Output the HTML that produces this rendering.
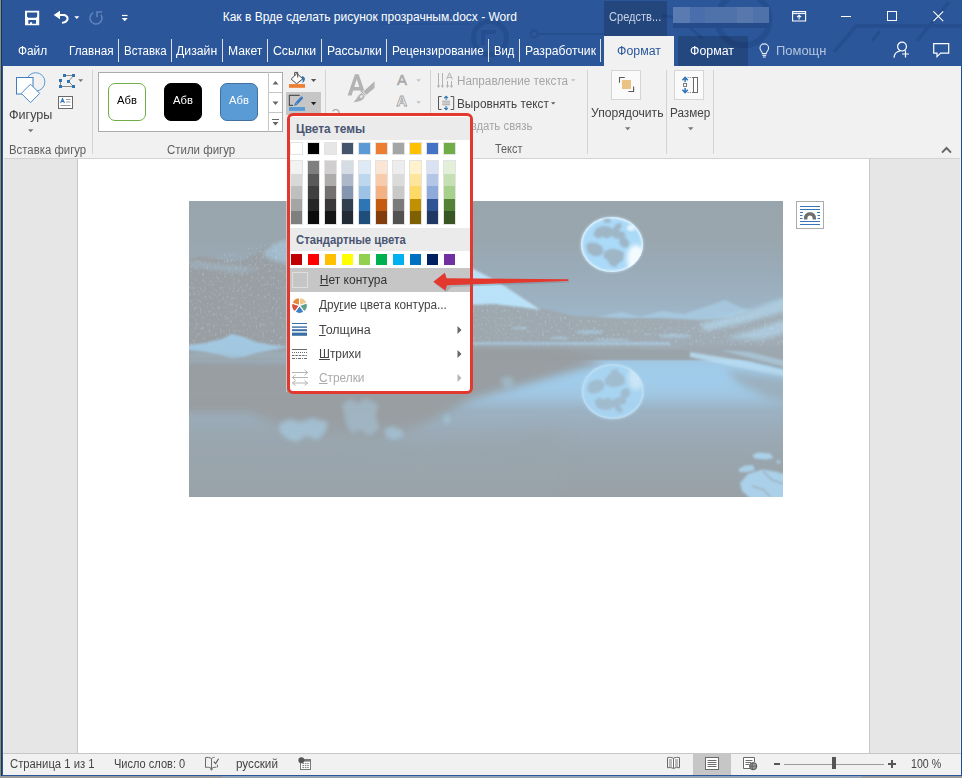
<!DOCTYPE html>
<html lang="ru">
<head>
<meta charset="utf-8">
<title>Как в Врде сделать рисунок прозрачным.docx - Word</title>
<style>
html,body{margin:0;padding:0}
body{width:962px;height:778px;position:relative;overflow:hidden;background:#8a8f94;font-family:"Liberation Sans",sans-serif;font-size:12px;color:#444}
.a{position:absolute}
.t{position:absolute;white-space:nowrap;line-height:1;transform-origin:0 0;font-size:12px}
.sep{position:absolute;width:1px;background:#d4d4d4;top:70px;height:84px}
.tsep{position:absolute;width:1px;background:#e0e0e0;top:39px;height:23px}
svg{position:absolute;overflow:visible}
.sw{position:absolute;width:11px;height:11px;top:143px;box-shadow:0 0 0 1px #e3e3e3}
.col{position:absolute;width:11px;top:161px;height:63px;box-shadow:0 0 0 1px #e3e3e3}
.col i{display:block;height:12.6px}
.ss{position:absolute;width:11px;height:11px;top:254px}
u{text-decoration:underline;text-underline-offset:1px}
</style>
</head>
<body>
<!-- desktop edges -->
<div class="a" style="left:0;top:0;width:1px;height:778px;background:#6c94aa"></div>
<div class="a" style="left:1px;top:0;width:1px;height:778px;background:#323232"></div>
<!-- window -->
<div class="a" id="win" style="left:2px;top:0;width:960px;height:776px;background:#2b579a"></div>

<!-- title bar decorations (circuit) -->
<svg class="a" style="left:0;top:0" width="962" height="66" viewBox="0 0 962 66">
<g fill="none" stroke="#254e8e" stroke-width="3.5">
<path d="M834 52 L856 26 H962"/>
<path d="M917 41 L949 2"/>
<path d="M872 41 L880 31" stroke-width="3"/>
<circle cx="743.5" cy="19.5" r="26" stroke-width="6"/>
<path d="M726 20 H742 L734 28Z" fill="#254e8e" stroke="none"/>
<path d="M662 16 C680 16 690 28 702 38" stroke-width="3"/>
<circle cx="490" cy="38" r="16.5" stroke-width="5"/>
<path d="M483 45 V32 H496" stroke-width="4"/>
<circle cx="534" cy="34" r="3.5" stroke-width="2"/>
<path d="M538 34 H604" stroke-width="2"/>
<path d="M380 24 H470" stroke-width="2" opacity=".5"/>
</g>
</svg>

<!-- contextual tab header -->
<div class="a" style="left:604px;top:1px;width:63px;height:35px;background:rgba(0,0,0,.185)"></div>
<!-- blurred account name -->
<div class="a" style="left:673px;top:23px;width:96px;height:5px;background:#264b8b"></div>
<div class="a" style="left:673px;top:7px;width:96px;height:16px;background:#5072ab"></div>
<div class="a" style="left:673px;top:7px;width:17px;height:16px;background:#5a7bb2"></div>
<div class="a" style="left:690px;top:7px;width:15px;height:16px;background:#4a6eab"></div>
<div class="a" style="left:737px;top:7px;width:16px;height:16px;background:#5877aa"></div>
<!-- active tab -->
<div class="a" style="left:604px;top:36px;width:70px;height:30px;background:#f1f1f1"></div>
<div class="a" style="left:678px;top:36px;width:70px;height:30px;background:rgba(0,0,0,.17)"></div>

<!-- tab separators -->
<div class="tsep" style="left:118px"></div>
<div class="tsep" style="left:171px"></div>
<div class="tsep" style="left:222px"></div>
<div class="tsep" style="left:267px"></div>
<div class="tsep" style="left:321px"></div>
<div class="tsep" style="left:386px"></div>
<div class="tsep" style="left:488px"></div>
<div class="tsep" style="left:519px"></div>
<div class="tsep" style="left:600px"></div>

<!-- ribbon -->
<div class="a" style="left:3px;top:66px;width:958px;height:92px;background:#f1f1f1"></div>
<div class="a" style="left:3px;top:158px;width:958px;height:1px;background:#d2d2d2"></div>
<!-- doc area -->
<div class="a" style="left:3px;top:159px;width:958px;height:594px;background:#e6e6e6"></div>
<div class="a" style="left:77px;top:159px;width:793px;height:594px;background:#c8c8c8"></div>
<div class="a" style="left:78px;top:159px;width:791px;height:594px;background:#fff"></div>
<div class="a" style="left:3px;top:66px;width:1px;height:709px;background:#f3f1ed"></div>
<div class="a" style="left:960px;top:66px;width:1px;height:709px;background:#f3f1ed"></div>
<!-- status bar -->
<div class="a" style="left:3px;top:753px;width:958px;height:1px;background:#c6c6c6"></div>
<div class="a" style="left:3px;top:754px;width:958px;height:21px;background:#f1f1f1"></div>

<!-- ribbon group separators -->
<div class="sep" style="left:92px"></div>
<div class="sep" style="left:325px"></div>
<div class="sep" style="left:430px"></div>
<div class="sep" style="left:587px"></div>
<div class="sep" style="left:666px"></div>
<div class="sep" style="left:713px"></div>

<!-- shapes gallery -->
<div class="a" style="left:98px;top:72px;width:185px;height:60px;background:#fff;border:1px solid #ababab;box-sizing:border-box"></div>
<div class="a" style="left:268px;top:72px;width:1px;height:60px;background:#c6c6c6"></div>
<div class="a" style="left:268px;top:92px;width:14px;height:1px;background:#c6c6c6"></div>
<div class="a" style="left:268px;top:112px;width:14px;height:1px;background:#c6c6c6"></div>
<div class="a" style="left:108px;top:83px;width:38px;height:38px;box-sizing:border-box;border:1px solid #70ad47;border-radius:7px;background:#fff"></div>
<div class="a" style="left:164px;top:83px;width:38px;height:38px;box-sizing:border-box;border:1px solid #000;border-radius:7px;background:#000"></div>
<div class="a" style="left:220px;top:83px;width:38px;height:38px;box-sizing:border-box;border:1px solid #41719c;border-radius:7px;background:#5b9bd5"></div>
<svg style="left:268px;top:72px" width="14" height="59" viewBox="0 0 14 59">
<path d="M4.5 12.5 L7.5 9 L10.5 12.5Z" fill="#666"/>
<path d="M4.5 29.5 L7.5 33 L10.5 29.5Z" fill="#666"/>
<path d="M4 47.5H11" stroke="#666" stroke-width="1"/>
<path d="M4.5 50 L7.5 53.5 L10.5 50Z" fill="#666"/>
</svg>

<!-- outline button pressed background -->
<div class="a" style="left:286px;top:92px;width:35px;height:23px;background:#c6c6c6"></div>

<!-- arrange / size boxes -->
<div class="a" style="left:611px;top:70px;width:30px;height:30px;box-sizing:border-box;border:1px solid #d5d5d5;background:#fafafa"></div>
<div class="a" style="left:674px;top:70px;width:30px;height:30px;box-sizing:border-box;border:1px solid #d5d5d5;background:#fafafa"></div>

<!-- status bar icons -->
<svg style="left:204px;top:756px" width="16" height="15" viewBox="204 756 16 15">
<path d="M211.5 758.6 C209.6 757.2 207.4 757.2 205.5 757.6 V767.4 C207.6 767 209.8 767.2 211.5 768.6 C213 767.3 214.6 767.1 216.4 767.3" fill="none" stroke="#6a6a6a" stroke-width="1"/>
<path d="M211.5 758.6V769.8M210 768.6 L211.5 770 L213 768.6" fill="none" stroke="#6a6a6a" stroke-width="1"/>
<path d="M211.5 758.6 C212.6 757.6 213.6 757.3 214.6 757.3M217.4 764.6V767.3" fill="none" stroke="#6a6a6a" stroke-width="1"/>
<path d="M213.8 761.6 L215.6 763.6 L218.6 758.8" fill="none" stroke="#555" stroke-width="1.1"/>
</svg>
<svg style="left:298px;top:757px" width="14" height="13" viewBox="298 757 14 13">
<rect x="300.5" y="759.5" width="10" height="10" fill="#fff" stroke="#777" stroke-width="1"/>
<rect x="300" y="759" width="11" height="2.6" fill="#777"/>
<path d="M302.4 763.6H309M302.4 765.6H309M302.4 767.6H309" stroke="#777" stroke-width="1" stroke-dasharray="1.6 .8"/>
<circle cx="301.4" cy="760.2" r="3" fill="#555"/>
</svg>
<!-- view buttons -->
<div class="a" style="left:693px;top:754px;width:38px;height:21px;background:#c6c6c6"></div>
<svg style="left:666px;top:756px" width="15" height="14" viewBox="666 756 15 14">
<path d="M673.5 758.3 C671.6 757.2 669.4 757.2 667.5 757.6 V767.8 C669.6 767.4 671.8 767.4 673.5 768.6 C675.2 767.4 677.4 767.4 679.5 767.8 V757.6 C677.6 757.2 675.4 757.2 673.5 758.3 V768.6" fill="#fff" stroke="#6a6a6a" stroke-width="1"/>
<path d="M668.8 760H672M668.8 762H672M668.8 764H672M668.8 766H672M675 760H678.2M675 762H678.2M675 764H678.2M675 766H678.2" stroke="#6a6a6a" stroke-width=".9"/>
</svg>
<svg style="left:705px;top:757px" width="14" height="13" viewBox="0 0 14 13">
<rect x="0.5" y="0.5" width="13" height="12" fill="#fff" stroke="#6a6a6a"/>
<path d="M2.5 3.5H11.5M2.5 5.5H11.5M2.5 7.5H11.5M2.5 9.5H11.5" stroke="#6a6a6a" stroke-width="1"/>
</svg>
<svg style="left:743px;top:756px" width="15" height="15" viewBox="0 0 15 15">
<path d="M7 12.5H0.5V1.5H11.5V6" fill="#fff" stroke="#6a6a6a" stroke-width="1"/>
<path d="M2.5 4.5H9.5M2.5 6.5H8M2.5 8.5H6.5" stroke="#6a6a6a" stroke-width="1"/>
<circle cx="10.2" cy="10.2" r="3.6" fill="#9a9a9a" stroke="#555" stroke-width="1"/>
<path d="M6.8 10.2H13.6M10.2 6.8C8.6 9 8.6 11.4 10.2 13.6" fill="none" stroke="#555" stroke-width=".8"/>
</svg>
<!-- zoom slider -->
<div class="a" style="left:774px;top:763px;width:6px;height:2px;background:#555"></div>
<div class="a" style="left:784px;top:764px;width:100px;height:1px;background:#9a9a9a"></div>
<div class="a" style="left:832px;top:757px;width:4px;height:12px;background:#555"></div>
<div class="a" style="left:888px;top:763px;width:8px;height:2px;background:#555"></div>
<div class="a" style="left:891px;top:760px;width:2px;height:8px;background:#555"></div>
<!-- window bottom border / desktop strip -->
<div class="a" style="left:2px;top:775px;width:960px;height:1px;background:#2b579a"></div>
<div class="a" style="left:0;top:776px;width:962px;height:2px;background:#9a9a9a"></div>
<div class="a" style="left:222px;top:776px;width:640px;height:2px;background:#94a3b5"></div>
<div class="a" style="left:961px;top:66px;width:1px;height:710px;background:#1d4c96"></div>

<!-- quick access toolbar -->
<svg style="left:25px;top:10px" width="15" height="16" viewBox="25 10 15 16">
<path fill="#fff" fill-rule="evenodd" d="M25 10.8 H39.2 V25.2 H25 Z M27 12.4 V16.6 L28.2 17.7 H36 L37.2 16.6 V12.4 Z M28.3 19.9 V23.8 H30 V22.3 H32.1 V23.8 H36 V19.9 Z"/>
</svg>
<svg style="left:53px;top:10px" width="16" height="15" viewBox="53 10 16 15">
<path d="M53.7 15 L60 10.8 V13.9 H63 C66.6 13.9 68.6 16 68.6 18.6 C68.6 21.4 66.2 23.6 62.2 23.8 L61.8 21.9 C64.8 21.6 66.5 20.4 66.5 18.6 C66.5 17 65.4 16.1 63 16.1 H60 V19.2 Z" fill="#fff"/>
</svg>
<svg style="left:74px;top:16px" width="6" height="4" viewBox="0 0 6 4"><path d="M0.3 0.3H5.3L2.8 3.1Z" fill="#fff"/></svg>
<svg style="left:89px;top:10px" width="14" height="15" viewBox="89 10 14 15">
<path d="M93.4 12.6 A6 6 0 1 0 100.9 14.6" fill="none" stroke="#5f83ba" stroke-width="1.5"/>
<path d="M97 17 V12 H102" fill="none" stroke="#5f83ba" stroke-width="1.6"/>
</svg>
<svg style="left:121px;top:14px" width="8" height="8" viewBox="0 0 8 8">
<path d="M1 1.5H6.5" stroke="#fff" stroke-width="1.2"/><path d="M0.8 4H6.7L3.75 7.2Z" fill="#fff"/>
</svg>

<!-- window buttons -->
<svg style="left:792px;top:11px" width="15" height="11" viewBox="0 0 15 11">
<path d="M0.6 0.6H13.6V10H0.6Z" fill="none" stroke="#fff" stroke-width="1.1"/>
<path d="M0.6 2.6H13.6" stroke="#fff" stroke-width="1"/>
<path d="M7.1 8.4V4.4M5 6.2 L7.1 4.2 L9.2 6.2" fill="none" stroke="#fff" stroke-width="1.1"/>
</svg>
<div class="a" style="left:841px;top:16px;width:10px;height:1px;background:#fff"></div>
<div class="a" style="left:887px;top:11px;width:10px;height:10px;box-sizing:border-box;border:1px solid #fff"></div>
<svg style="left:933px;top:11px" width="11" height="11" viewBox="0 0 11 11"><path d="M0.4 0.4 L10.2 10.2 M10.2 0.4 L0.4 10.2" stroke="#fff" stroke-width="1.1"/></svg>

<!-- tell me bulb, share, comments -->
<svg style="left:759px;top:43px" width="12" height="15" viewBox="0 0 12 15">
<path d="M3.4 10.6 C3.4 8.6 1 7.6 1 4.9 C1 2.6 2.9 0.9 5.3 0.9 C7.7 0.9 9.6 2.6 9.6 4.9 C9.6 7.6 7.2 8.6 7.2 10.6 Z" fill="none" stroke="#e8edf6" stroke-width="1.1"/>
<path d="M3.4 12.4H7.2M3.9 14H6.7" stroke="#e8edf6" stroke-width="1"/>
</svg>
<svg style="left:893px;top:41px" width="17" height="18" viewBox="0 0 17 18">
<circle cx="9" cy="5.6" r="4.4" fill="none" stroke="#fff" stroke-width="1.2"/>
<path d="M1 16.6 C1.4 12.6 4 10.4 7 10" fill="none" stroke="#fff" stroke-width="1.2"/>
<path d="M12.5 9.6V16.4M9.1 13H15.9" stroke="#fff" stroke-width="1.2"/>
</svg>
<svg style="left:933px;top:43px" width="17" height="15" viewBox="0 0 17 15">
<path d="M0.7 0.7H15.7V10.1H7.6L4 13.6V10.1H0.7Z" fill="none" stroke="#fff" stroke-width="1.2" stroke-linejoin="miter"/>
</svg>

<!-- ribbon: shapes big icon -->
<svg style="left:14px;top:70px" width="34" height="36" viewBox="14 70 34 36">
<circle cx="35.7" cy="81.9" r="9.2" fill="#f1f1f1" stroke="#5b9bd5" stroke-width="1"/>
<rect x="16.5" y="77.5" width="16.5" height="16.5" fill="#fff" stroke="#3e7fc1" stroke-width="1"/>
<path d="M30.5 84.2 L39.7 93.4 L30.5 102.6 L21.3 93.4Z" fill="#fff" stroke="#4a8ccd" stroke-width="1"/>
</svg>
<svg style="left:28px;top:129px" width="6" height="4" viewBox="0 0 6 4"><path d="M0 0.3H5.4L2.7 3.2Z" fill="#777"/></svg>
<!-- edit points icon -->
<svg style="left:58px;top:73px" width="27" height="16" viewBox="58 73 27 16">
<path d="M64.5 75.5H73.5 M60.5 80.5V86.5H73.5 M73.5 75.5 L68.5 81.5 L73.5 86.5" fill="none" stroke="#8a8a8a" stroke-width="1"/>
<g fill="#2e75b6"><rect x="63" y="74" width="3" height="3"/><rect x="72" y="74" width="3" height="3"/><rect x="59" y="79" width="3" height="3"/><rect x="67" y="80" width="3" height="3"/><rect x="59" y="85" width="3" height="3"/><rect x="72" y="85" width="3" height="3"/></g>
<path d="M78.2 79.3H83.2L80.7 82.1Z" fill="#777"/>
</svg>
<!-- text box icon -->
<svg style="left:58px;top:96px" width="15" height="13" viewBox="0 0 15 13">
<rect x="0.5" y="0.5" width="14" height="12" fill="#fff" stroke="#6a6a6a"/>
<path d="M2.6 7 L4.5 2.6 L6.4 7 M3.3 5.4H5.7" fill="none" stroke="#2e75b6" stroke-width="1.1"/>
<path d="M8 3.5H12.6M8 6H12.6M2.6 9.5H12.6" stroke="#9a9a9a" stroke-width="1"/>
</svg>

<!-- shape fill bucket -->
<svg style="left:289px;top:71px" width="28" height="18" viewBox="289 71 28 18">
<path d="M302.2 76 C304.6 76.6 305.6 78.6 304.6 80.4 C304 81.6 303.2 82.4 302.4 83.2 C302.8 81 303 79.2 301.2 77.4 Z" fill="#2e75b6"/>
<path d="M291.2 79.1 L296.9 73.5 L302.8 78.8 L296.6 83.8 Z" fill="#fff" stroke="#4a4a4a" stroke-width="1"/>
<path d="M294.7 75.6 V72.4 H297.7 V77.6" fill="none" stroke="#4a4a4a" stroke-width="1"/>
<rect x="289" y="84.1" width="16" height="3.7" fill="#ed7d31"/>
<path d="M310.9 79H316.3L313.6 82Z" fill="#555"/>
</svg>
<!-- shape outline pencil -->
<svg style="left:289px;top:94px" width="28" height="18" viewBox="289 94 28 18">
<path d="M299.7 95.4H289.4V105.4H293" fill="none" stroke="#555" stroke-width="1.2"/>
<path d="M294 106 L295.2 102.8 L300.8 96.8 C301.8 95.8 303.8 97.6 302.8 98.8 L297.2 104.8 Z" fill="#3d7cc4"/>
<path d="M295.6 102.4 L297.6 104.4" stroke="#c6c6c6" stroke-width=".6"/>
<rect x="289" y="107" width="16" height="3.9" fill="#5b9bd5"/>
<path d="M310.9 102H316.3L313.6 105.2Z" fill="#222"/>
</svg>

<!-- wordart quick styles (disabled) -->
<svg style="left:346px;top:72px" width="32" height="32" viewBox="346 72 32 32">
<path d="M347.6 95.4 L354.9 74.2 H358.7 L366 95.4 H362 L360.4 90.4 H353.2 L351.6 95.4 Z M354.3 87 H359.3 L356.8 79.2 Z" fill="#b3b3b3" fill-rule="evenodd"/>
<path d="M375 80.6 V88 L366.4 95.2 L362.8 91.4 Z" fill="#b3b3b3" stroke="#f1f1f1" stroke-width=".9"/>
<path d="M361.6 92.6 L365 96.6 C364 100.6 358.6 102.7 352.6 102.5 C356.4 100.2 357.2 95 361.6 92.6Z" fill="#b3b3b3" stroke="#f1f1f1" stroke-width=".7"/>
<ellipse cx="361.4" cy="96.6" rx="1.7" ry="1.3" fill="#e6e6e6" transform="rotate(-40 361.4 96.6)"/>
</svg>
<svg style="left:396px;top:72px" width="13" height="14" viewBox="0 0 13 14">
<text x="1" y="12.9" font-family="Liberation Sans, sans-serif" font-size="14.9" fill="#a6a6a6" stroke="#a6a6a6" stroke-width=".5">A</text>
</svg>
<svg style="left:416px;top:79px" width="6" height="4" viewBox="0 0 6 4"><path d="M0.2 0.2H5L2.6 2.8Z" fill="#c4c4c4"/></svg>
<svg style="left:396px;top:93px" width="14" height="15" viewBox="0 0 14 15">
<text x="0.6" y="12.6" font-family="Liberation Sans, sans-serif" font-size="14.6" font-weight="bold" fill="#fafafa" stroke="#a3a3a3" stroke-width=".85">A</text>
</svg>
<svg style="left:416px;top:101px" width="6" height="4" viewBox="0 0 6 4"><path d="M0.2 0.2H5L2.6 2.8Z" fill="#c4c4c4"/></svg>
<span class="t" style="left:331.6px;top:108.3px;font-size:12px;color:#a6a6a6;height:4.6px;overflow:hidden">Э</span>

<!-- text direction icon (disabled) -->
<svg style="left:437px;top:72px" width="17" height="17" viewBox="437 72 17 17">
<g stroke="#b2b2b2" stroke-width="1" fill="none">
<path d="M438.5 73V87M442.5 73V87M447.5 81V87M451.5 81V87"/>
<path d="M446.6 79.4 L449.5 72.8 L452.4 79.4 M447.6 77.4H451.4"/>
</g>
<g fill="#b2b2b2"><path d="M436.8 85.4H440.2L438.5 88Z"/><path d="M440.8 85.4H444.2L442.5 88Z"/><path d="M445.8 85.4H449.2L447.5 88Z"/><path d="M449.8 85.4H453.2L451.5 88Z"/></g>
</svg>
<svg style="left:571px;top:79px" width="5" height="3" viewBox="0 0 5 3"><path d="M0 0.2H4.4L2.2 2.6Z" fill="#bdbdbd"/></svg>
<!-- align text icon -->
<svg style="left:437px;top:95px" width="18" height="16" viewBox="437 95 18 16">
<path d="M441.6 96.5H438.5V109.5H441.6M450.6 96.5H453.7V109.5H450.6" fill="none" stroke="#555" stroke-width="1"/>
<path d="M442.2 101.2H450M442.2 103H450M442.2 104.8H450" stroke="#9a9a9a" stroke-width=".9"/>
<path d="M446.1 100V96.4M444.2 98.2 L446.1 96.2 L448 98.2" fill="none" stroke="#2e75b6" stroke-width="1.1"/>
<path d="M446.1 106V109.6M444.2 107.8 L446.1 109.8 L448 107.8" fill="none" stroke="#2e75b6" stroke-width="1.1"/>
</svg>
<svg style="left:551px;top:102px" width="5" height="3" viewBox="0 0 5 3"><path d="M0 0.2H4.4L2.2 2.6Z" fill="#555"/></svg>

<!-- arrange icon -->
<svg style="left:618px;top:76px" width="17" height="17" viewBox="618 76 17 17">
<rect x="622" y="80" width="9" height="9" fill="#eac282"/>
<path d="M619.5 82.8V77.5H624.8M628.4 91.5H633.6V86.4" fill="none" stroke="#5a5a5a" stroke-width="1.1"/>
</svg>
<svg style="left:625px;top:127px" width="6" height="4" viewBox="0 0 6 4"><path d="M0 0.3H5.4L2.7 3.2Z" fill="#777"/></svg>
<!-- size icon -->
<svg style="left:681px;top:76px" width="18" height="18" viewBox="681 76 18 18">
<rect x="693.5" y="77.5" width="4" height="15" fill="#fff" stroke="#6a6a6a" stroke-width="1"/>
<path d="M687.6 77.5H693M687.6 92.5H693" stroke="#777" stroke-width="1" stroke-dasharray="1 1.2"/>
<rect x="683.6" y="83.4" width="3" height="3" fill="#fff" stroke="#6a6a6a" stroke-width=".9"/>
<path d="M685.1 82V77.8M682.4 80.2 L685.1 77.4 L687.8 80.2" fill="none" stroke="#2e75b6" stroke-width="1.5"/>
<path d="M685.1 88V92.2M682.4 89.8 L685.1 92.6 L687.8 89.8" fill="none" stroke="#2e75b6" stroke-width="1.5"/>
</svg>
<svg style="left:688px;top:127px" width="6" height="4" viewBox="0 0 6 4"><path d="M0 0.3H5.4L2.7 3.2Z" fill="#777"/></svg>
<!-- collapse ribbon chevron -->
<svg style="left:941px;top:146px" width="11" height="8" viewBox="0 0 11 8"><path d="M1 6.6 L5.5 2 L10 6.6" fill="none" stroke="#666" stroke-width="2"/></svg>

<!-- layout options button next to picture -->
<div class="a" style="left:796px;top:201px;width:28px;height:28px;box-sizing:border-box;border:1px solid #ababab;background:#fff"></div>
<svg style="left:796px;top:201px" width="28" height="28" viewBox="0 0 28 28">
<path d="M4 5.5H24M4 8.5H24M4 20.5H24M4 23.5H24M4 11.5H7M21 11.5H24M4 14.5H6.5M21.5 14.5H24M4 17.5H6.5M21.5 17.5H24" stroke="#3a74b8" stroke-width="1"/>
<path d="M8 18.4 V17 C8 9.4 20 9.4 20 17 V18.4 H16.6 V17 C16.6 13.6 11.4 13.6 11.4 17 V18.4 Z" fill="#6e6e6e"/>
</svg>


<span class="t g" style="left:222.7px;top:10.5px;color:#fff;">Как в Врде сделать рисунок прозрачным.docx - Word</span>
<span class="t g" style="left:609.4px;top:10.8px;color:#c8d3e6;transform:scaleX(0.922);">Средств...</span>
<span class="t g" style="left:18.4px;top:44.8px;color:#fff;transform:scaleX(0.989);">Файл</span>
<span class="t g" style="left:68.9px;top:44.8px;color:#fff;transform:scaleX(0.978);">Главная</span>
<span class="t g" style="left:123.9px;top:44.8px;color:#fff;transform:scaleX(0.957);">Вставка</span>
<span class="t g" style="left:176.4px;top:44.8px;color:#fff;transform:scaleX(1.021);">Дизайн</span>
<span class="t g" style="left:228.2px;top:44.8px;color:#fff;transform:scaleX(1.014);">Макет</span>
<span class="t g" style="left:273.1px;top:44.8px;color:#fff;transform:scaleX(1.022);">Ссылки</span>
<span class="t g" style="left:326.9px;top:44.8px;color:#fff;transform:scaleX(1.016);">Рассылки</span>
<span class="t g" style="left:391.9px;top:44.8px;color:#fff;transform:scaleX(0.990);">Рецензирование</span>
<span class="t g" style="left:494.4px;top:44.8px;color:#fff;transform:scaleX(0.930);">Вид</span>
<span class="t g" style="left:525.1px;top:44.8px;color:#fff;transform:scaleX(1.014);">Разработчик</span>
<span class="t g" style="left:616.7px;top:44.8px;color:#2b579a;transform:scaleX(1.030);">Формат</span>
<span class="t g" style="left:690.4px;top:44.8px;color:#fff;transform:scaleX(1.030);">Формат</span>
<span class="t g" style="left:775.8px;top:44.8px;color:#b4c4de;transform:scaleX(1.078);">Помощн</span>
<span class="t g" style="left:8.9px;top:108.5px;color:#444;transform:scaleX(1.049);">Фигуры</span>
<span class="t g" style="left:8.9px;top:143.8px;color:#5f5f5f;transform:scaleX(0.948);">Вставка фигур</span>
<span class="t g" style="left:166.9px;top:143.8px;color:#5f5f5f;transform:scaleX(0.955);">Стили фигур</span>
<span class="t g" style="left:456.8px;top:75.0px;color:#a6a6a6;transform:scaleX(0.977);">Направление текста</span>
<span class="t g" style="left:456.8px;top:98.0px;color:#444;transform:scaleX(0.982);">Выровнять текст</span>
<span class="t g" style="left:456.8px;top:120.2px;color:#a6a6a6;transform:scaleX(0.949);">Создать связь</span>
<span class="t g" style="left:494.6px;top:143.1px;color:#5f5f5f;transform:scaleX(0.907);">Текст</span>
<span class="t g" style="left:590.8px;top:106.8px;color:#444;transform:scaleX(1.015);">Упорядочить</span>
<span class="t g" style="left:669.8px;top:106.8px;color:#444;transform:scaleX(0.977);">Размер</span>
<span class="t g" style="left:117.4px;top:94.9px;color:#000;font-size:10.5px;transform:scaleX(1.069);">Абв</span>
<span class="t g" style="left:173.4px;top:94.9px;color:#fff;font-size:10.5px;transform:scaleX(1.069);">Абв</span>
<span class="t g" style="left:229.4px;top:94.9px;color:#fff;font-size:10.5px;transform:scaleX(1.069);">Абв</span>
<span class="t g" style="left:10.0px;top:757.7px;color:#444;transform:scaleX(0.940);">Страница 1 из 1</span>
<span class="t g" style="left:114.4px;top:757.7px;color:#444;transform:scaleX(0.920);">Число слов: 0</span>
<span class="t g" style="left:236.4px;top:757.7px;color:#444;transform:scaleX(0.973);">русский</span>
<span class="t g" style="left:911.4px;top:757.7px;color:#444;transform:scaleX(0.887);">100 %</span>
<!-- picture (approximation of the faded, semi-transparent moonlit lake photo) -->
<svg style="left:189px;top:201px" width="594" height="296" viewBox="189 201 594 296">
<defs>
<linearGradient id="gsky" x1="0" y1="201" x2="0" y2="497" gradientUnits="userSpaceOnUse">
<stop offset="0" stop-color="#99a5ac"/>
<stop offset=".13" stop-color="#99a6ae"/>
<stop offset=".233" stop-color="#9aabb8"/>
<stop offset=".30" stop-color="#9bafbe"/>
<stop offset=".375" stop-color="#9db5c7"/>
<stop offset=".48" stop-color="#a2bdd0"/>
<stop offset=".487" stop-color="#99a2a8"/>
<stop offset=".534" stop-color="#99a3aa"/>
<stop offset=".541" stop-color="#a1c6e2"/>
<stop offset=".56" stop-color="#a0cbe8"/>
<stop offset=".597" stop-color="#a0cceb"/>
<stop offset=".63" stop-color="#a0cae7"/>
<stop offset=".66" stop-color="#a0c4df"/>
<stop offset=".706" stop-color="#9bb2c3"/>
<stop offset=".787" stop-color="#9baab6"/>
<stop offset=".875" stop-color="#99a5ad"/>
<stop offset="1" stop-color="#99a1a7"/>
</linearGradient>
<linearGradient id="gmnt" x1="189" y1="0" x2="783" y2="0" gradientUnits="userSpaceOnUse">
<stop offset="0" stop-color="#999ea2"/>
<stop offset=".4" stop-color="#9ba3a9"/>
<stop offset=".52" stop-color="#9ea8af"/>
<stop offset="1" stop-color="#a0abb3"/>
</linearGradient>
<linearGradient id="grefl" x1="0" y1="349" x2="0" y2="445" gradientUnits="userSpaceOnUse">
<stop offset="0" stop-color="#989c9f"/>
<stop offset=".65" stop-color="#999da0"/>
<stop offset="1" stop-color="#9aa3a9"/>
</linearGradient>
<filter id="b1" x="-10%" y="-10%" width="120%" height="120%"><feGaussianBlur stdDeviation="1"/></filter>
<filter id="b2" x="-20%" y="-20%" width="140%" height="140%"><feGaussianBlur stdDeviation="2"/></filter>
<filter id="b3" x="-20%" y="-20%" width="140%" height="140%"><feGaussianBlur stdDeviation="4"/></filter>
<filter id="b6" x="-30%" y="-30%" width="160%" height="160%"><feGaussianBlur stdDeviation="8"/></filter>
<filter id="spk" x="0" y="0" width="100%" height="100%">
<feTurbulence type="fractalNoise" baseFrequency=".45 .3" numOctaves="2" seed="7" result="n"/>
<feColorMatrix in="n" type="matrix" values="0 0 0 0 .67  0 0 0 0 .83  0 0 0 0 .94  0 0 0 4 -2.25" result="m"/>
<feComposite in="m" in2="SourceGraphic" operator="in"/>
</filter>
<clipPath id="cimg"><rect x="189" y="201" width="594" height="296"/></clipPath>
<clipPath id="cmoon"><ellipse cx="612" cy="244.5" rx="31" ry="27.5"/></clipPath>
<clipPath id="cmoon2"><ellipse cx="612.8" cy="391.5" rx="31" ry="27.5"/></clipPath>
</defs>
<g clip-path="url(#cimg)">
<rect x="189" y="201" width="594" height="296" fill="url(#gsky)"/>
<!-- far mountains -->
<path d="M585 322 L603 316 L622 312 L640 317 L662 311 L684 314 L705 307 L725 300 L742 308 L760 313 L790 304 V335 H585Z" fill="#aed6f0" opacity=".55" filter="url(#b1)"/>
<!-- left mountain / forest -->
<path d="M150 262 L189 259 L200 256 L215 258 L230 262 L245 260 L255 254 L265 246 L275 240 L283 237 L300 231 L330 236 L380 246 L430 255 L473 267 L500 283 L540 308 L575 316 L620 318 L660 318 L700 320 L740 318 L800 310 V349 H150Z" fill="url(#gmnt)" filter="url(#b1)"/>
<!-- right hill: trees and snow -->
<path d="M640 333 L690 324 L730 317 L760 307 L800 298 V349 H640Z" fill="#a0acb5" filter="url(#b1)"/>
<path d="M700 324 L740 313 L790 296 V310 L740 324 L705 331Z" fill="#b4dbf3" opacity=".65" filter="url(#b2)"/>
<path d="M726 338 L760 328 L790 318 V332 L760 340Z" fill="#b4dbf3" opacity=".6" filter="url(#b2)"/>
<!-- snow on left mountain -->
<path d="M262 254 L274 243 L290 238 V264 L274 261Z" fill="#a9d3ee" opacity=".55" filter="url(#b2)"/>
<path d="M470 267 L500 283 L541 310 L520 307 L495 304 L470 305Z" fill="#b9e1f8" filter="url(#b1)"/>
<path d="M189 261 L230 265 L262 269 L240 273 L189 267Z" fill="#a9d3ee" opacity=".3" filter="url(#b2)"/>
<g fill="#aed6f0" opacity=".5" filter="url(#b1)">
<ellipse cx="590" cy="332" rx="14" ry="2"/><ellipse cx="612" cy="340" rx="18" ry="1.6"/><ellipse cx="560" cy="338" rx="10" ry="1.5"/><ellipse cx="675" cy="336" rx="16" ry="2"/><ellipse cx="520" cy="328" rx="8" ry="1.5"/>
</g>
<!-- forest texture (light specks) -->
<path d="M189 262 L283 240 L300 234 L473 270 L540 311 L575 319 L700 322 L783 312 V347 H189Z" fill="#fff" filter="url(#spk)" opacity=".22"/>
<!-- shoreline -->
<path d="M150 347 L189 345 L205 343 L222 339 L232 334 L244 337 L256 342 L272 345 L290 347 L272 350 L256 353 L244 357 L232 359 L222 355 L205 352 L189 350 L150 350Z" fill="#a5d2f0" opacity=".8" filter="url(#b1)"/>
<rect x="470" y="342" width="200" height="3" fill="#a8cbe2" opacity=".8" filter="url(#b1)"/>
<path d="M680 346 H790 V371 L740 359 L690 352Z" fill="#9da8b0" opacity=".95" filter="url(#b1)"/>
<path d="M720 350 L750 352 L790 362 V368 L750 358Z" fill="#b4dbf3" opacity=".5" filter="url(#b1)"/>
<path d="M690 352 L740 360 L790 372 V378 L735 367 L690 357Z" fill="#b9def4" opacity=".85" filter="url(#b1)"/>
<!-- lake: reflection of left mountain -->
<path d="M120 358 H189 L290 359 L470 350 L560 350 L604 362 L548 378 L470 400 L420 426 L380 440 L330 440 L290 432 L250 414 L189 414 L120 412Z" fill="url(#grefl)" opacity=".95" filter="url(#b3)"/>
<path d="M150 420 H300 L420 450 L560 430 L560 500 H150Z" fill="#9aa5ac" opacity=".55" filter="url(#b6)"/>
<path d="M725 370 L800 380 V404 L768 398 L740 384Z" fill="#9aa7b1" opacity=".75" filter="url(#b3)"/>
<!-- light patches in reflection -->
<g fill="#a9d5f0" filter="url(#b2)">
<path d="M279 424 L290 419 L300 422 L312 418 L328 422 L326 431 L318 440 L306 436 L296 442 L286 438 L280 432Z" opacity=".55"/>
<path d="M342 404 L350 399 L358 403 L366 398 L378 404 L376 418 L380 428 L370 436 L360 430 L352 434 L346 424Z" opacity=".4"/>
<path d="M384 429 L392 426 L402 430 L404 436 L394 440 L386 437Z" opacity=".5"/>
<path d="M444 416 L449 414 L450 422 L445 424Z" opacity=".5"/>
<path d="M500 378 L512 376 L514 386 L504 388Z" opacity=".4"/>
<path d="M189 353 L290 352 V359 H189Z" opacity=".25"/>
</g>
<!-- bottom stones -->
<g fill="#acd6f1" filter="url(#b1)">
<path d="M752.5 455 L758 452.6 L770 453.6 L773.5 458 L766 459.6 L755 458.6Z" opacity=".9"/>
<path d="M776 461 L780 460.4 L781 463 L777 463.4Z" opacity=".8"/>
<path d="M738.5 469 L745 465.4 L753 465 L755 470 L747 472 L739.5 472Z" opacity=".85"/>
<path d="M739 473 L747 472.4 L755 470.4 L754 476 L746 478 L739 476.6Z" fill="#9aa4ab" opacity=".8"/>
<path d="M740 483 L748 474 L762 469.6 L775 471.4 L790 476 V500 H752 L742 491Z" opacity=".9"/>
<path d="M763 471 L772 480 L784 484 M752 486 L764 490 L770 497" fill="none" stroke="#9ba7b0" stroke-width="1.6" opacity=".8"/>
</g>
<!-- moon -->
<ellipse cx="612" cy="244.5" rx="31.6" ry="28.1" fill="#cfe8f7" opacity=".7" filter="url(#b1)"/>
<g clip-path="url(#cmoon)">
<rect x="580" y="216" width="64" height="58" fill="#aadaf8"/>
<ellipse cx="612" cy="244.5" rx="31" ry="27.5" fill="none" stroke="#eef8fe" stroke-width="2.4" filter="url(#b1)"/>
<ellipse cx="636" cy="259" rx="9" ry="14" fill="#f4fbff" filter="url(#b2)"/>
<ellipse cx="631" cy="228" rx="4" ry="3" fill="#e6f4fc" filter="url(#b1)"/>
<g fill="#9eb3c2" opacity=".92" filter="url(#b1)">
<path d="M593.3 234.9 L596.1 228.4 L602.6 226.1 L609.0 226.5 L612.7 229.3 L615.5 224.7 L620.1 222.8 L622.0 226.5 L618.3 231.1 L623.9 232.1 L625.7 235.8 L622.0 239.5 L615.5 238.6 L611.8 235.8 L607.2 238.6 L602.6 236.7 L597.9 238.6Z"/><path d="M585.9 245.0 L590.5 242.3 L597.0 243.2 L602.6 246.9 L603.5 252.4 L599.8 256.1 L593.3 256.1 L587.7 252.4Z"/><path d="M604.4 251.5 L610.9 248.7 L618.3 249.7 L623.9 252.4 L622.9 259.9 L618.3 263.6 L615.5 267.3 L610.9 265.4 L607.2 259.9 L603.5 257.1Z"/><path d="M620.1 238.6 L625.7 237.6 L629.4 242.3 L627.6 247.8 L622.0 246.9 L619.2 243.2Z"/>
<ellipse cx="607.2" cy="220.7" rx="3.7" ry="2"/>
</g>
</g>
<!-- moon reflection -->
<ellipse cx="612.8" cy="391.5" rx="31.8" ry="28.3" fill="#b9def4" opacity=".55" filter="url(#b1)"/>
<g clip-path="url(#cmoon2)" opacity=".92">
<rect x="580" y="362" width="66" height="60" fill="#a7d4f1"/>
<ellipse cx="612.8" cy="391.5" rx="31" ry="27.5" fill="none" stroke="#c9e5f6" stroke-width="2.2" filter="url(#b1)"/>
<ellipse cx="636" cy="378" rx="8" ry="12" fill="#cbe6f7" filter="url(#b2)"/>
<g fill="#9fb6c7" opacity=".85" filter="url(#b1)">
<path d="M594.3 401.1 L597.1 407.6 L603.6 409.9 L610.0 409.5 L613.7 406.7 L616.5 411.3 L621.1 413.2 L623.0 409.5 L619.3 404.9 L624.9 403.9 L626.7 400.2 L623.0 396.5 L616.5 397.4 L612.8 400.2 L608.2 397.4 L603.6 399.3 L598.9 397.4Z"/><path d="M586.9 391.0 L591.5 393.7 L598.0 392.8 L603.6 389.1 L604.5 383.6 L600.8 379.9 L594.3 379.9 L588.7 383.6Z"/><path d="M605.4 384.5 L611.9 387.3 L619.3 386.3 L624.9 383.6 L623.9 376.1 L619.3 372.4 L616.5 368.7 L611.9 370.6 L608.2 376.1 L604.5 378.9Z"/><path d="M621.1 397.4 L626.7 398.4 L630.4 393.7 L628.6 388.2 L623.0 389.1 L620.2 392.8Z"/>
</g>
</g>
</g>
</svg>

<!-- outline colour popup -->
<div class="a" style="left:286px;top:201px;width:1px;height:191px;background:#bfc9cc"></div>
<div class="a" style="left:287px;top:113px;width:186px;height:281px;box-sizing:border-box;border:3px solid #e2382d;border-radius:6px;background:#fff"></div>
<div class="a" style="left:290px;top:117px;width:180px;height:23px;background:#ebebeb"></div>
<div class="a" style="left:290px;top:228px;width:180px;height:23px;background:#ebebeb"></div>
<div class="a" style="left:290px;top:268px;width:180px;height:24px;background:#c6c6c6"></div>
<div class="sw" style="left:291px;background:#ffffff"></div>
<div class="sw" style="left:308px;background:#000000"></div>
<div class="sw" style="left:325px;background:#e7e6e6"></div>
<div class="sw" style="left:342px;background:#44546a"></div>
<div class="sw" style="left:359px;background:#5b9bd5"></div>
<div class="sw" style="left:376px;background:#ed7d31"></div>
<div class="sw" style="left:393px;background:#a5a5a5"></div>
<div class="sw" style="left:410px;background:#ffc000"></div>
<div class="sw" style="left:427px;background:#4472c4"></div>
<div class="sw" style="left:444px;background:#70ad47"></div>
<div class="col" style="left:291px"><i style="background:#f2f2f2"></i><i style="background:#d8d8d8"></i><i style="background:#bfbfbf"></i><i style="background:#a5a5a5"></i><i style="background:#7f7f7f"></i></div>
<div class="col" style="left:308px"><i style="background:#7f7f7f"></i><i style="background:#595959"></i><i style="background:#3f3f3f"></i><i style="background:#262626"></i><i style="background:#0c0c0c"></i></div>
<div class="col" style="left:325px"><i style="background:#d0cece"></i><i style="background:#aeabab"></i><i style="background:#757070"></i><i style="background:#3a3838"></i><i style="background:#171616"></i></div>
<div class="col" style="left:342px"><i style="background:#d6dce4"></i><i style="background:#adb9ca"></i><i style="background:#8496b0"></i><i style="background:#323f4f"></i><i style="background:#222a35"></i></div>
<div class="col" style="left:359px"><i style="background:#deebf6"></i><i style="background:#bdd7ee"></i><i style="background:#9cc3e5"></i><i style="background:#2e75b5"></i><i style="background:#1e4e79"></i></div>
<div class="col" style="left:376px"><i style="background:#fbe5d5"></i><i style="background:#f7cbac"></i><i style="background:#f4b183"></i><i style="background:#c55a11"></i><i style="background:#833c0b"></i></div>
<div class="col" style="left:393px"><i style="background:#ededed"></i><i style="background:#dbdbdb"></i><i style="background:#c9c9c9"></i><i style="background:#7b7b7b"></i><i style="background:#525252"></i></div>
<div class="col" style="left:410px"><i style="background:#fff2cc"></i><i style="background:#fee599"></i><i style="background:#ffd965"></i><i style="background:#bf9000"></i><i style="background:#7f6000"></i></div>
<div class="col" style="left:427px"><i style="background:#d9e2f3"></i><i style="background:#b4c6e7"></i><i style="background:#8eaadb"></i><i style="background:#2f5496"></i><i style="background:#1f3864"></i></div>
<div class="col" style="left:444px"><i style="background:#e2efd9"></i><i style="background:#c5e0b3"></i><i style="background:#a8d08d"></i><i style="background:#538135"></i><i style="background:#375623"></i></div>
<div class="ss" style="left:291px;background:#c00000"></div>
<div class="ss" style="left:308px;background:#ff0000"></div>
<div class="ss" style="left:325px;background:#ffc000"></div>
<div class="ss" style="left:342px;background:#ffff00"></div>
<div class="ss" style="left:359px;background:#92d050"></div>
<div class="ss" style="left:376px;background:#00b050"></div>
<div class="ss" style="left:393px;background:#00b0f0"></div>
<div class="ss" style="left:410px;background:#0070c0"></div>
<div class="ss" style="left:427px;background:#002060"></div>
<div class="ss" style="left:444px;background:#7030a0"></div>
<div class="a" style="left:292px;top:272px;width:16px;height:16px;box-sizing:border-box;border:1px solid #dedede;background:#c6c6c6"></div>
<svg style="left:457px;top:326px" width="5" height="8" viewBox="0 0 5 8"><path d="M0.5 0 L4.5 4 L0.5 8Z" fill="#666"/></svg>
<svg style="left:457px;top:350px" width="5" height="8" viewBox="0 0 5 8"><path d="M0.5 0 L4.5 4 L0.5 8Z" fill="#666"/></svg>
<svg style="left:457px;top:374px" width="5" height="8" viewBox="0 0 5 8"><path d="M0.5 0 L4.5 4 L0.5 8Z" fill="#b5b5b5"/></svg>

<!-- popup menu icons -->
<svg style="left:291px;top:297px" width="17" height="17" viewBox="-8.5 -8.5 17 17">
<g stroke="#fff" stroke-width="1.1">
<path d="M0 0 L0 -7.8 A7.8 7.8 0 0 1 7.42 -2.41 Z" fill="#eec88a"/>
<path d="M0 0 L7.42 -2.41 A7.8 7.8 0 0 1 4.58 6.31 Z" fill="#5f9e8f"/>
<path d="M0 0 L4.58 6.31 A7.8 7.8 0 0 1 -4.58 6.31 Z" fill="#3f7fc4"/>
<path d="M0 0 L-4.58 6.31 A7.8 7.8 0 0 1 -7.42 -2.41 Z" fill="#d4553f"/>
<path d="M0 0 L-7.42 -2.41 A7.8 7.8 0 0 1 0 -7.8 Z" fill="#e8873a"/>
</g>
</svg>
<svg style="left:292px;top:322px" width="16" height="15" viewBox="292 322 16 15">
<path d="M292 323.5H307" stroke="#3a6ea5" stroke-width="1"/>
<path d="M292 327.1H307" stroke="#3a6ea5" stroke-width="1.4"/>
<path d="M292 330.2H307" stroke="#3a6ea5" stroke-width="2"/>
<path d="M292 334.2H307" stroke="#3a6ea5" stroke-width="3.2"/>
</svg>
<svg style="left:292px;top:348px" width="16" height="12" viewBox="292 348 16 12">
<path d="M292 349.5H307" stroke="#6a6a6a" stroke-width="1"/>
<path d="M292 352.5H307" stroke="#6a6a6a" stroke-width="1" stroke-dasharray="1 1"/>
<path d="M292 355.5H307" stroke="#6a6a6a" stroke-width="1" stroke-dasharray="2.4 1"/>
<path d="M292 358.5H307" stroke="#6a6a6a" stroke-width="1" stroke-dasharray="3 1 1 1"/>
</svg>
<svg style="left:291px;top:369px" width="18" height="17" viewBox="291 369 18 17">
<g fill="none" stroke="#b4b4b4" stroke-width="1">
<path d="M292 372.5H307.5M304.5 369.8 L307.6 372.5 L304.5 375.2"/>
<path d="M292.5 377.5H308M295.5 374.8 L292.4 377.5 L295.5 380.2"/>
<path d="M292.5 383H307.5M295.5 380.6 L292.4 383 L295.5 385.4M304.5 380.6 L307.6 383 L304.5 385.4"/>
</g>
</svg>

<!-- red annotation arrow -->
<svg style="left:430px;top:268px" width="142" height="26" viewBox="430 268 142 26">
<path d="M434 283 L569 281.8 L569 282.6 L452 287 L446 292 Z" fill="#6d7f8c" opacity=".35"/>
<path d="M433.3 281.7 L444.8 272.8 L446.6 278.2 L568.4 279.2 L568.4 281 L447 285.2 L445.4 290.6 Z" fill="#e2382d"/>
</svg>

<span class="t g" style="left:296.0px;top:123.1px;color:#4a5573;font-weight:700;transform:scaleX(0.990);">Цвета темы</span>
<span class="t g" style="left:296.2px;top:234.3px;color:#4a5573;font-weight:700;transform:scaleX(0.939);">Стандартные цвета</span>
<span class="t g" style="left:319.8px;top:273.8px;color:#333;"><u>Н</u>ет контура</span>
<span class="t g" style="left:319.4px;top:299.0px;color:#444;transform:scaleX(0.983);">Дру<u>г</u>ие цвета контура...</span>
<span class="t g" style="left:319.4px;top:323.8px;color:#444;transform:scaleX(1.040);"><u>Т</u>олщина</span>
<span class="t g" style="left:319.4px;top:347.8px;color:#444;transform:scaleX(0.991);"><u>Ш</u>трихи</span>
<span class="t g" style="left:319.4px;top:371.8px;color:#ababab;transform:scaleX(0.987);"><u>С</u>трелки</span>
</body>
</html>
